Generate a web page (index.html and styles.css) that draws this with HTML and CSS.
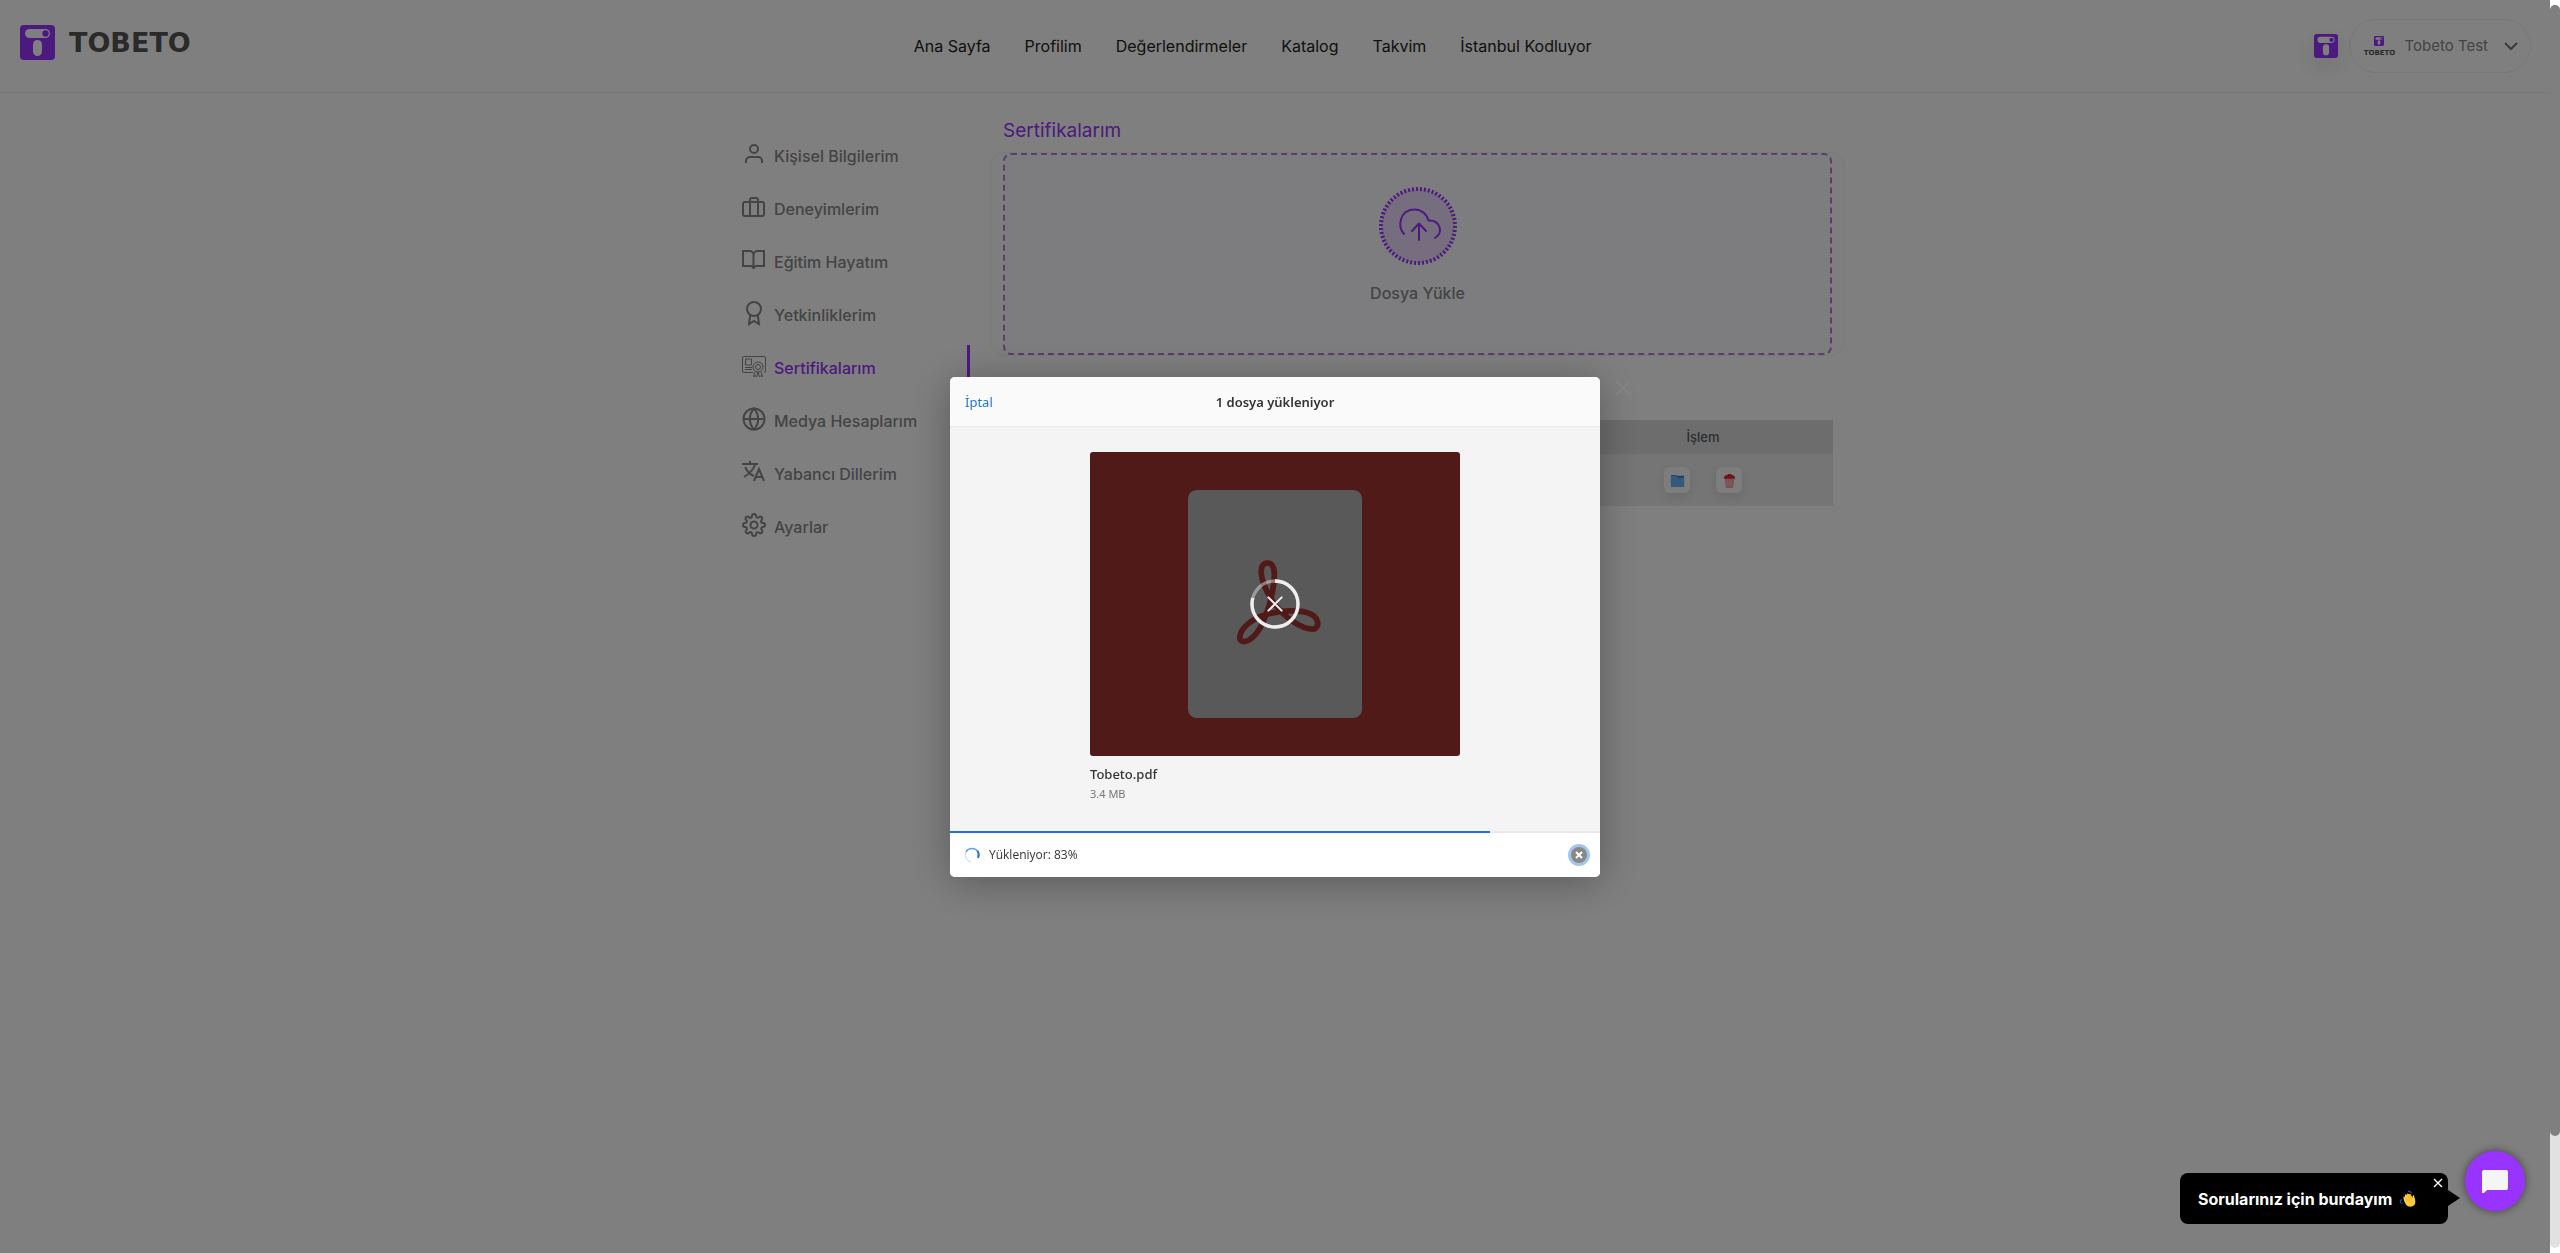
FILE: index.html
```html
<!DOCTYPE html>
<html lang="tr">
<head>
<meta charset="utf-8">
<title>Tobeto - Sertifikalarım</title>
<meta name="viewport" content="width=device-width, initial-scale=1">
<link rel="stylesheet" href="styles.css">
</head>
<body>
<svg class="defs" aria-hidden="true">
  <symbol id="mark" viewBox="0 0 35 35">
    <rect width="35" height="35" rx="4" fill="#93f"/>
    <rect x="5" y="4" width="25" height="9" rx="4.500" fill="#fff"/>
    <circle cx="25.500" cy="8.500" r="3.200" fill="#93f"/>
    <rect x="13" y="15" width="9" height="16" rx="4.500" fill="#fff"/>
  </symbol>
</svg>
<div class="page">
  <header class="header">
    <a class="brand" href="#"><svg class="brand-mark"><use href="#mark"/></svg><span class="brand-name">TOBETO</span></a>
    <nav class="nav">
      <a href="#">Ana Sayfa</a>
      <a href="#">Profilim</a>
      <a href="#">Değerlendirmeler</a>
      <a href="#">Katalog</a>
      <a href="#">Takvim</a>
      <a href="#">İstanbul Kodluyor</a>
    </nav>
    <div class="account">
      <a class="app-link" href="#" aria-label="Tobeto"><svg><use href="#mark"/></svg></a>
      <button class="user" type="button">
        <span class="avatar"><svg><use href="#mark"/></svg><span>TOBETO</span></span>
        <span class="user-name">Tobeto Test</span>
        <svg class="chevron" viewBox="0 0 14 10" fill="none" stroke="#777" stroke-width="2"><path d="M1 2l6 6 6-6"/></svg>
      </button>
    </div>
  </header>
  <main class="main">
    <nav class="side">
      <a href="#"><svg viewBox="0 0 24 24"><path d="M20 21v-2a4 4 0 0 0-4-4H8a4 4 0 0 0-4 4v2"/><circle cx="12" cy="7" r="4"/></svg>Kişisel Bilgilerim</a>
      <a href="#"><svg viewBox="0 0 24 24"><rect x="1" y="7" width="21" height="14" rx="2"/><path d="M16 21V5a2 2 0 0 0-2-2h-4a2 2 0 0 0-2 2v16"/></svg>Deneyimlerim</a>
      <a href="#"><svg viewBox="0 0 24 24"><path d="M1 3h6a4 4 0 0 1 4.500 4v14a3 3 0 0 0-3-3H1zM22 3h-6a4 4 0 0 0-4.500 4v14a3 3 0 0 1 3-3H22z"/></svg>Eğitim Hayatım</a>
      <a href="#"><svg viewBox="0 0 24 24"><circle cx="12" cy="8" r="7"/><path d="M8.200 13.900L7 23l5-3 5 3-1.200-9.100"/></svg>Yetkinliklerim</a>
      <a href="#" class="active"><svg viewBox="0 0 24 24"><g stroke-width="1"><path d="M11 18.500H2a1.500 1.500 0 0 1-1.500-1.500V4A1.500 1.500 0 0 1 2 2.500h20A1.500 1.500 0 0 1 23.500 4v13a1.500 1.500 0 0 1-1.500 1.500"/><path d="M3.500 5h6v6h-6zM3 13.500h7M3 15.500h7"/><circle cx="16" cy="13" r="5"/><circle cx="16" cy="13" r="2.500"/><path d="M13 17.500l-1.500 5 2-.700 1 1.200 1.500-5 1.500 5 1-1.200 2 .700-1.500-5"/></g></svg>Sertifikalarım</a>
      <a href="#"><svg viewBox="0 0 24 24"><circle cx="12" cy="12" r="10.500"/><path d="M1.500 12h21M12 1.500c5.500 6 5.500 15 0 21c-5.500-6-5.500-15 0-21z"/></svg>Medya Hesaplarım</a>
      <a href="#"><svg viewBox="0 0 24 24"><path d="M0 4h16M8 1v3M3 7c2 4 6 8 9 9M13 5C11 10 7 14 2 17M12 21l5-12 5 12M14 17h6"/></svg>Yabancı Dillerim</a>
      <a href="#"><svg viewBox="0 0 24 24"><circle cx="12" cy="12" r="3.500"/><path d="M19.400 15a1.650 1.650 0 0 0 .33 1.820l.06.060a2 2 0 1 1-2.830 2.830l-.06-.060a1.650 1.650 0 0 0-2.820 1.170V21a2 2 0 0 1-4 0v-.09a1.650 1.650 0 0 0-2.900-1.170l-.06.060a2 2 0 1 1-2.830-2.830l.06-.060A1.650 1.650 0 0 0 3.090 14H3a2 2 0 0 1 0-4h.09a1.650 1.650 0 0 0 1.170-2.900l-.06-.060a2 2 0 1 1 2.830-2.830l.06.060A1.650 1.650 0 0 0 10 3.090V3a2 2 0 0 1 4 0v.09a1.650 1.650 0 0 0 2.820 1.170l.06-.060a2 2 0 1 1 2.830 2.830l-.06.060A1.650 1.650 0 0 0 20.910 10H21a2 2 0 0 1 0 4h-.09a1.650 1.650 0 0 0-1.510 1z"/></svg>Ayarlar</a>
    </nav>
    <section class="content">
      <h1>Sertifikalarım</h1>
      <div class="drop">
        <button class="drop-inner" type="button">
          <svg class="cloud" viewBox="0 0 78 78" fill="none" stroke="#93f" stroke-width="2">
            <circle cx="39" cy="39" r="37" fill="#ecdaff" stroke="none"/>
            <circle cx="39" cy="39" r="37" stroke-width="4" stroke-dasharray="2 2"/>
            <path stroke-linecap="round" stroke-linejoin="round" d="M25 47C18 39 21 23 35 22.500C43 22 48 28 49.500 33.500C61 33 65 45 56 51M40 53V37M33 44l7-7.500 7 7.500"/>
          </svg>
          <span>Dosya Yükle</span>
        </button>
      </div>
      <table class="files">
        <thead><tr><td></td><th scope="col">İşlem</th></tr></thead>
        <tbody><tr><td></td><td>
          <div class="actions">
            <button type="button" aria-label="Görüntüle"><svg viewBox="0 0 16 16"><path d="M1 3a1 1 0 0 1 1-1h4l2 1h7v11H1z" fill="#2f7ed8"/><path d="M1 3h6l1 2h7v9a1 1 0 0 1-1 1H2a1 1 0 0 1-1-1z" fill="#6bb0fa"/></svg></button>
            <button type="button" aria-label="Sil"><svg viewBox="0 0 16 16"><path d="M3 6h10l-1 9a1 1 0 0 1-1 1H5a1 1 0 0 1-1-1z" fill="#f4a0a8"/><path d="M6 8v6M8 8v6M10 8v6" stroke="#f8c0c6"/><path d="M2 6a4 4 0 0 1 4-4V1h4v1a4 4 0 0 1 4 4z" fill="#e02430"/></svg></button>
          </div>
        </td></tr></tbody>
      </table>
    </section>
  </main>
</div>
<div class="overlay">
  <section class="modal" role="dialog" aria-labelledby="modal-title">
    <header class="modal-head">
      <button class="cancel" type="button">İptal</button>
      <h2 id="modal-title">1 dosya yükleniyor</h2>
    </header>
    <div class="modal-body">
      <div class="file">
        <div class="preview">
          <svg class="pdf" viewBox="354 150 522 684">
            <rect x="354" y="150" width="522" height="684" rx="26" fill="#595959"/>
            <path fill="none" stroke="#4f1a18" stroke-width="17" d="M592 369C562 369 571 425 603 476C640 535 700 570 733 567C750 557 745 533 722 522C690 507 630 512 590 523C540 538 505 570 510 598C520 615 552 600 575 555C600 505 613 440 613 400C613 380 605 369 592 369z"/>
            <circle cx="615" cy="492" r="69" fill="none" stroke="#fff" stroke-opacity=".4" stroke-width="10"/>
            <circle cx="615" cy="492" r="69" fill="none" stroke="#eee" stroke-width="10" pathLength="100" stroke-dasharray="79 21" transform="rotate(-90 615 492)"/>
            <path stroke="#eee" stroke-width="6" stroke-linecap="round" d="M595 472l40 40M635 472l-40 40"/>
          </svg>
        </div>
        <div class="file-name">Tobeto.pdf</div>
        <div class="file-size">3.4 MB</div>
      </div>
    </div>
    <div class="bar"><div class="bar-fill" style="width:83%"></div></div>
    <footer class="status">
      <svg class="spinner" viewBox="0 0 16 16" fill="none" stroke="#2275d7"><path stroke-width="1" opacity=".3" d="M7 15A7 7 0 0 1 2 5"/><path stroke-width="1.500" opacity=".7" d="M2 5A7 7 0 0 1 14 5"/><path stroke-width="2" d="M13.500 4A7 7 0 0 1 14 11"/></svg>
      <span>Yükleniyor: 83%</span>
      <button class="stop" type="button" aria-label="İptal"><svg viewBox="0 0 16 16"><circle cx="8" cy="8" r="8" fill="#888"/><path stroke="#fff" stroke-width="2" d="M5 5l6 6M11 5l-6 6"/></svg></button>
    </footer>
  </section>
  <button class="dismiss" type="button" aria-label="Kapat"><svg viewBox="0 0 16 16" stroke="#838383" stroke-width="2"><path d="M1 1l14 14M15 1L1 15"/></svg></button>
</div>
<aside class="chat">
  <div class="bubble">
    <span>Sorularınız için burdayım</span>
    <svg class="wave" viewBox="0 0 17 17"><path fill="#ffc83d" d="M4.500 8.500C4 6 5.500 6 6 7C5.500 4 7 3.500 7.800 5C8 3 9.500 3 10 4.500C10.500 3.500 12 4 12.300 5.500L13.500 8C13.300 6 14 5 15 5.500C15.500 8 17 11 16 14C14 17.500 9 17.500 7 14.500C6 13 5 11 4.500 8.500z"/><path fill="none" stroke="#f2a11c" stroke-width=".7" d="M6 7l3 4M8 5l3 4M10 4.500l2.500 4"/><path fill="none" stroke="#2f4f9c" stroke-width="1.200" d="M9 1.500c2-.500 3 .5 3.500 2M3 9.500c-3 1-1.500 4 .5 4"/></svg>
    <button class="bubble-close" type="button" aria-label="Kapat"><svg viewBox="0 0 10 10" stroke="#fff" stroke-width="1.400"><path d="M1 1l8 8M9 1L1 9"/></svg></button>
  </div>
  <button class="chat-open" type="button" aria-label="Sohbet"><svg viewBox="0 0 26 23"><path fill="#f5f5f5" d="M2 0h22a2 2 0 0 1 2 2v16a2 2 0 0 1-2 2H5l-3 3H0V2a2 2 0 0 1 2-2z"/></svg></button>
</aside>
<div class="rail" aria-hidden="true"><div class="track"><div class="thumb"></div></div></div>
</body>
</html>
```
FILE: styles.css
```css
* { box-sizing: border-box; }
html, body { height: 100%; overflow: hidden; }
body { margin: 0; background: #fff; color: #888; font: 16px/24px Inter, sans-serif; }
a { color: inherit; text-decoration: none; }
button { margin: 0; padding: 0; border: 0; background: none; color: inherit; font: inherit; }
svg { display: block; overflow: visible; flex: none; }
.defs { position: absolute; width: 0; height: 0; }
.page { margin-right: 10px; min-height: 100%; }

.header { display: flex; align-items: center; justify-content: space-between; height: 93px; padding: 0 19px 0 20px; border-bottom: 1px solid #f4f4f4; }
.brand { display: flex; align-items: center; gap: 14px; padding-bottom: 7px; color: #555; }
.brand-mark { width: 35px; height: 35px; }
.brand-name { font: bold 27px/27px "DejaVu Sans", sans-serif; }
.nav { display: flex; gap: 34px; color: #222; }
.account { display: flex; align-items: center; gap: 11px; }
.app-link { width: 24px; height: 24px; border-radius: 4px; box-shadow: 0 8px 24px rgba(0, 0, 0, .12); }
.app-link svg { width: 24px; height: 24px; }
.user { display: flex; align-items: center; height: 54px; padding: 0 12px; border: 1px solid #f0f0f0; border-radius: 27px; }
.avatar { width: 34px; font: bold 7px/8px "DejaVu Sans", sans-serif; color: #555; }
.avatar svg { width: 10px; height: 10px; margin: 0 auto 3px; }
.avatar > span { display: block; text-align: center; }
.user-name { margin: 0 16px 0 8px; font-size: 15px; }
.chevron { width: 14px; height: 10px; }

.main { display: grid; grid-template-columns: 285px 1fr; max-width: 1140px; margin: 0 auto; }
.side { display: grid; gap: 7px; align-content: start; padding: 40px 20px 0 37px; font-weight: 500; }
.side a { display: flex; align-items: center; gap: 8px; height: 46px; }
.side svg { width: 24px; height: 24px; margin-bottom: 4px; fill: none; stroke: #888; stroke-width: 2; }
.side .active { color: #93f; border-right: 3px solid #93f; }

.content { padding-top: 24px; }
h1 { margin: 0 13px 8px; font: 400 19px/27px Inter, sans-serif; color: #93f; }
.drop { padding: 0 12px; border: 1px solid #f4f4fa; border-radius: 14px; background: #fcfcfe; }
.drop-inner { display: flex; flex-direction: column; align-items: center; gap: 16px; width: 100%; height: 202px; padding-top: 32px; border: 2px dashed #b280d8; border-radius: 8px; background: #fafaff; font-weight: 500; }
.cloud { width: 78px; height: 78px; }
.files { width: calc(100% - 25px); margin: 64px 12px 0 13px; border-collapse: collapse; table-layout: fixed; background: #ebebeb; }
.files th, .files td { padding: 0; }
.files tr > :last-child { width: 260px; }
.files thead { background: #dadada; color: #555b63; border-bottom: 1px solid #e8e8e8; }
.files th { height: 34px; font-size: 13px; font-weight: 500; }
.files tbody td { height: 52px; }
.actions { display: flex; justify-content: center; gap: 26px; }
.actions button { display: grid; place-items: center; width: 26px; height: 26px; border-radius: 6px; background: #fafafa; box-shadow: 0 4px 12px rgba(0, 0, 0, .1); }
.actions svg { width: 15px; height: 15px; }

.overlay { position: fixed; inset: 0 10px 0 0; display: grid; place-items: center; padding-top: 1px; background: rgba(0, 0, 0, .5); }
.modal { width: 650px; max-width: 100%; border-radius: 5px; overflow: hidden; background: #f4f4f4; color: #333; font: 14px/20px "Noto Sans", sans-serif; box-shadow: 0 5px 40px rgba(0, 0, 0, .3); }
.modal-head { display: grid; grid-template-columns: 1fr auto 1fr; align-items: center; height: 50px; padding: 0 15px; border-bottom: 1px solid #eaeaea; background: #fafafa; }
.cancel { justify-self: start; color: #2275d7; font-size: 13px; }
h2 { margin: 0; font-size: 13px; font-weight: 600; }
.modal-body { height: 404px; padding-top: 25px; }
.file { width: 370px; margin: 0 auto; }
.preview { display: grid; place-items: center; height: 304px; border-radius: 3px; background: #4f1a18; }
.pdf { width: 174px; height: 228px; }
.file-name { margin-top: 8px; font-size: 13px; font-weight: 500; }
.file-size { font-size: 11px; color: #757575; }
.bar { height: 2px; background: #eaeaea; }
.bar-fill { height: 2px; background: #2275d7; }
.status { display: flex; align-items: center; gap: 9px; height: 44px; padding: 0 10px 0 14px; background: #fff; font: 500 12px/20px "Open Sans", sans-serif; }
.spinner { width: 16px; height: 16px; }
.stop { margin-left: auto; padding: 3px; border-radius: 50%; background: #a3c6ee; }
.stop svg { width: 16px; height: 16px; }
.dismiss { position: absolute; left: calc(50% + 340px); top: calc(50% - 247px); width: 16px; height: 16px; }
.dismiss svg { width: 16px; height: 16px; }

.chat { position: fixed; right: 35px; bottom: 29px; display: flex; align-items: flex-end; gap: 17px; }
.bubble { position: relative; display: flex; align-items: center; gap: 7px; width: 268px; height: 51px; padding: 0 18px; border-radius: 8px; background: #000; color: #fff; font-size: 16px; font-weight: 700; white-space: nowrap; }
.bubble::after { content: ""; position: absolute; left: 100%; top: 17px; border: solid transparent; border-width: 8px 0 8px 12px; border-left-color: #000; }
.wave { width: 17px; height: 17px; }
.bubble-close { position: absolute; right: 5px; top: 5px; }
.bubble-close svg { width: 10px; height: 10px; }
.chat-open { display: grid; place-items: center; width: 60px; height: 60px; margin-bottom: 13px; border-radius: 50%; background: #93f; box-shadow: 0 0 8px rgba(0, 0, 0, .5); }
.chat-open svg { width: 26px; height: 23px; }

.rail { position: fixed; inset: 0 0 0 auto; width: 10px; padding: 5px 0; background: #fff; }
.track { height: 100%; border-radius: 5px; background: #e1e1e1; }
.thumb { height: 91%; border-radius: 5px; background: #7f7f7f; }
```
